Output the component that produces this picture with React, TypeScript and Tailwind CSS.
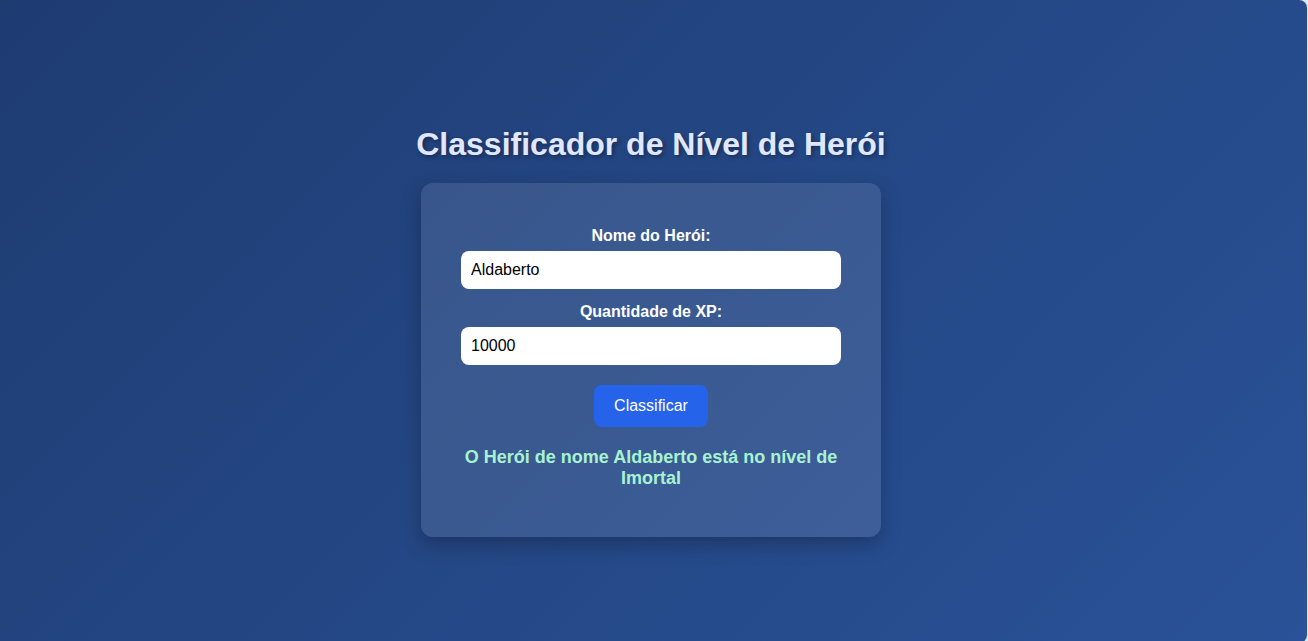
import { useState } from 'react';

function classify(xp: number) {
  if (xp <= 1000) return 'Ferro';
  if (xp <= 2000) return 'Bronze';
  if (xp <= 5000) return 'Prata';
  if (xp <= 7000) return 'Ouro';
  if (xp <= 8000) return 'Platina';
  if (xp <= 9000) return 'Ascendente';
  if (xp <= 10000) return 'Imortal';
  return 'Radiante';
}

export default function App() {
  const [name, setName] = useState('Aldaberto');
  const [xp, setXp] = useState('10000');
  const [result, setResult] = useState(
    'O Herói de nome Aldaberto está no nível de Imortal'
  );

  const handleClassify = () => {
    setResult(`O Herói de nome ${name} está no nível de ${classify(Number(xp))}`);
  };

  return (
    <div className="h-[641px] overflow-hidden bg-[#dce8f6] font-['Liberation_Sans',Arial,sans-serif]">
      <div className="mr-px h-[643px] rounded-r-lg bg-[linear-gradient(135deg,#1e3c72,#2a5298)] flex flex-col items-center pt-[126px] pr-[5px]">
        <h1 className="text-[32px] leading-[37px] font-bold text-[#e0e7ff] mb-[20px] [text-shadow:2px_2px_4px_rgba(0,0,0,0.35)]">
          Classificador de Nível de Herói
        </h1>

        <div className="w-[460px] rounded-xl bg-white/10 px-10 pt-[44px] pb-[48px] shadow-[0_8px_20px_rgba(0,0,0,0.25)] flex flex-col items-center">
          <label className="text-base leading-[18px] font-bold text-white mb-[6px]">
            Nome do Herói:
          </label>
          <input
            value={name}
            onChange={(e) => setName(e.target.value)}
            className="w-full h-[38px] rounded-lg bg-white px-[10px] text-base text-black outline-none"
          />

          <label className="text-base leading-[18px] font-bold text-white mt-[14px] mb-[6px]">
            Quantidade de XP:
          </label>
          <input
            value={xp}
            onChange={(e) => setXp(e.target.value)}
            className="w-full h-[38px] rounded-lg bg-white px-[10px] text-base text-black outline-none"
          />

          <button
            onClick={handleClassify}
            className="mt-5 h-[42px] w-[114px] rounded-lg bg-[#2563eb] text-base text-white hover:bg-[#1d4ed8] transition-colors"
          >
            Classificar
          </button>

          <p className="mt-[20px] text-center text-lg leading-[21px] font-bold text-[#a7f3d0]">
            {result}
          </p>
        </div>
      </div>
    </div>
  );
}
